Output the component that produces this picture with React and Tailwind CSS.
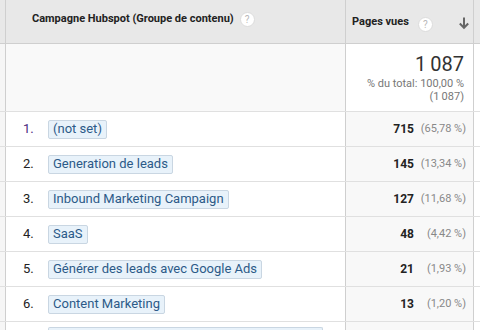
import React from "react";

const rows = [
  { n: "1.", label: "(not set)", v: "715", p: "(65,78 %)", nc: "text-[#4a2a80]" },
  { n: "2.", label: "Generation de leads", v: "145", p: "(13,34 %)" },
  { n: "3.", label: "Inbound Marketing Campaign", v: "127", p: "(11,68 %)" },
  { n: "4.", label: "SaaS", v: "48", p: "(4,42 %)" },
  { n: "5.", label: "Générer des leads avec Google Ads", v: "21", p: "(1,93 %)" },
  { n: "6.", label: "Content Marketing", v: "13", p: "(1,20 %)" },
];

function Help() {
  return (
    <span className="inline-flex items-center justify-center w-[15px] h-[15px] rounded-full bg-white border border-[#dcdcdc] text-[10px] text-[#b8b8b8] leading-none">
      ?
    </span>
  );
}

export default function App() {
  return (
    <div className="w-[480px] h-[330px] overflow-hidden bg-white text-[#222] font-['Roboto',sans-serif]">
      {/* header */}
      <div className="flex h-[44px] bg-[#e8e8e8] border-b border-[#cfcfcf]">
        <div className="w-[6px] border-r border-[#cfcfcf]" />
        <div className="w-[340px] border-r border-[#cfcfcf] flex items-center pl-[26px] gap-[6px] pb-[4px]">
          <span className="text-[11px] font-bold text-[#222]">Campagne Hubspot (Groupe de contenu)</span>
          <Help />
        </div>
        <div className="w-[128px] border-r border-[#cfcfcf] flex items-center pl-[6px] pr-[3px] pt-[2px]">
          <span className="text-[11px] font-bold text-[#222]">Pages vues</span>
          <span className="ml-[9px]"><Help /></span>
          <svg className="ml-auto" width="12" height="14" viewBox="0 0 12 14">
            <path d="M6 1.5 V11.5 M1.8 7.5 L6 11.8 L10.2 7.5" stroke="#666" strokeWidth="2" fill="none" />
          </svg>
        </div>
        <div className="flex-1" />
      </div>
      {/* summary */}
      <div className="flex h-[68px] border-b border-[#e0e0e0]">
        <div className="w-[6px] bg-[#f6f6f6] border-r border-[#cfcfcf]" />
        <div className="w-[340px] bg-[#f9f9f9] border-r border-[#cfcfcf]" />
        <div className="w-[128px] bg-white border-r border-[#cfcfcf] flex flex-col items-end pr-[9px] pt-[9px]">
          <span className="text-[20px] leading-[22px] text-[#333]">1{"\u2009"}087</span>
          <span className="text-[11px] leading-[13px] text-[#777] mt-[2px]">% du total: 100,00 %</span>
          <span className="text-[11px] leading-[13px] text-[#777]">(1{"\u2009"}087)</span>
        </div>
        <div className="flex-1 bg-white" />
      </div>
      {rows.map((r) => (
        <div key={r.n} className="flex h-[35px] border-b border-[#e0e0e0]">
          <div className="w-[6px] bg-[#f6f6f6] border-r border-[#cfcfcf]" />
          <div className="w-[340px] bg-white border-r border-[#cfcfcf] flex items-center">
            <span className={`w-[42px] pl-[17px] text-[13px] ${r.nc || "text-[#222]"}`}>{r.n}</span>
            <span className="h-[19px] flex items-center px-[4px] rounded-[2px] border border-[#c9d6e2] bg-[#e8f2fa] text-[13px] text-[#2c5a88] whitespace-nowrap">
              {r.label}
            </span>
          </div>
          <div className="w-[128px] bg-[#f8f8f8] border-r border-[#cfcfcf] flex items-center justify-end pr-[7px]">
            <span className="text-[12px] font-bold text-[#222]">{r.v}</span>
            <span className="w-[52px] text-right text-[11px] text-[#888]">{r.p}</span>
          </div>
          <div className="flex-1 bg-white" />
        </div>
      ))}
      <div className="flex h-[20px]">
        <div className="w-[6px] bg-[#f6f6f6] border-r border-[#cfcfcf]" />
        <div className="w-[340px] bg-white border-r border-[#cfcfcf] pl-[42px] pt-[5px]">
          <div className="w-[275px] h-[10px] border-t border-x border-[#c9d6e2] bg-[#e8f2fa] rounded-t-[2px]" />
        </div>
        <div className="w-[128px] bg-[#f8f8f8] border-r border-[#cfcfcf]" />
        <div className="flex-1 bg-white" />
      </div>
    </div>
  );
}
